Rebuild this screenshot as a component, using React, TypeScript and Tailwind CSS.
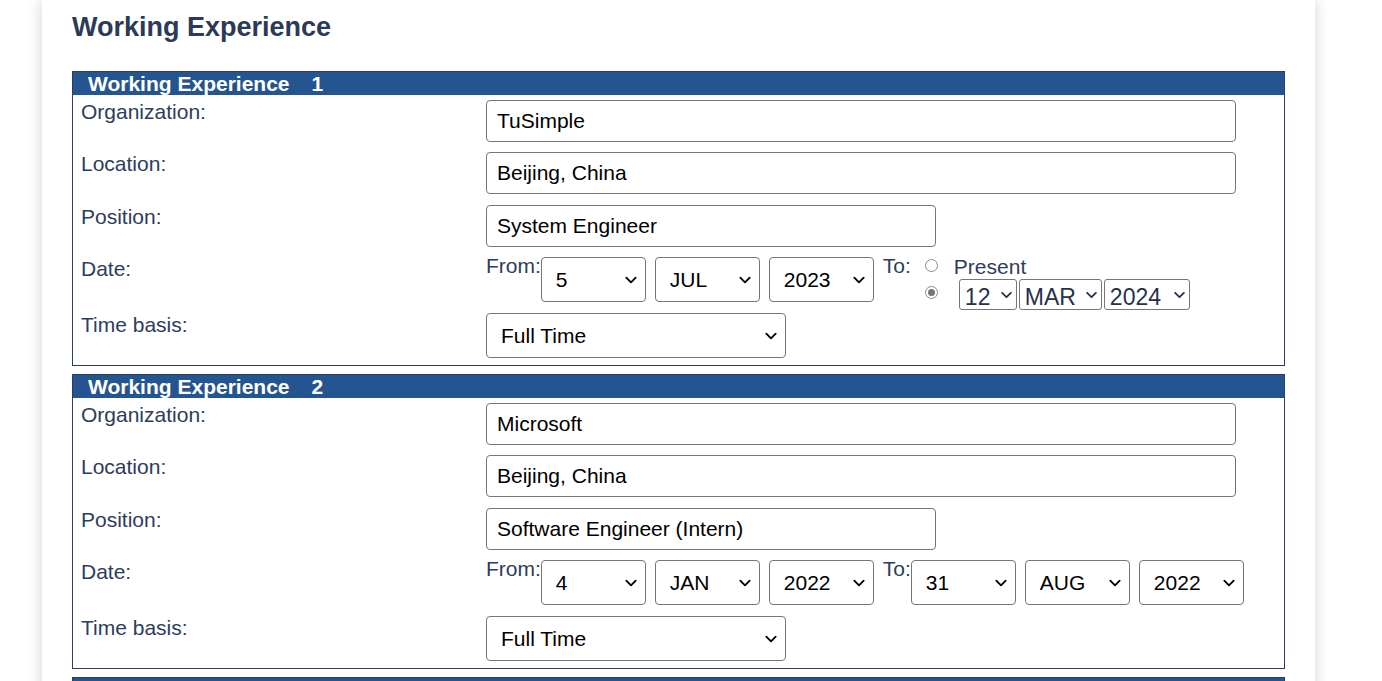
import React from "react";

const days = Array.from({ length: 31 }, (_, i) => String(i + 1));
const months = ["JAN", "FEB", "MAR", "APR", "MAY", "JUN", "JUL", "AUG", "SEP", "OCT", "NOV", "DEC"];
const years = ["2018", "2019", "2020", "2021", "2022", "2023", "2024", "2025"];

type Experience = {
  organization: string;
  location: string;
  position: string;
  from: [string, string, string];
  to: [string, string, string] | null;
  present?: [string, string, string];
  basis: string;
};

const experiences: Experience[] = [
  {
    organization: "TuSimple",
    location: "Beijing, China",
    position: "System Engineer",
    from: ["5", "JUL", "2023"],
    to: null,
    present: ["12", "MAR", "2024"],
    basis: "Full Time",
  },
  {
    organization: "Microsoft",
    location: "Beijing, China",
    position: "Software Engineer (Intern)",
    from: ["4", "JAN", "2022"],
    to: ["31", "AUG", "2022"],
    basis: "Full Time",
  },
  {
    organization: "",
    location: "",
    position: "",
    from: ["1", "JAN", "2021"],
    to: ["1", "JAN", "2021"],
    basis: "Full Time",
  },
];

function Chevron({ className }: { className: string }) {
  return (
    <svg
      viewBox="0 0 10 6"
      className={`pointer-events-none absolute top-1/2 -translate-y-1/2 ${className}`}
      fill="none"
      stroke="currentColor"
      strokeWidth="1.6"
      strokeLinecap="round"
      strokeLinejoin="round"
    >
      <polyline points="1,1 5,5 9,1" />
    </svg>
  );
}

// select with the chevron drawn on top (native one is hidden)
function Select({
  options,
  value,
  className,
  chevron,
}: {
  options: string[];
  value: string;
  className: string;
  chevron: string;
}) {
  return (
    <div className="relative inline-block">
      <select defaultValue={value} className={`block appearance-none bg-white outline-none ${className}`}>
        {options.map((o) => (
          <option key={o}>{o}</option>
        ))}
      </select>
      <Chevron className={chevron} />
    </div>
  );
}

function BigSelect({ options, value }: { options: string[]; value: string }) {
  return (
    <div className="mt-[3px]">
      <Select
        options={options}
        value={value}
        className="h-[45px] w-[105px] rounded-[4px] border border-[#767676] pl-[14px] text-black"
        chevron="right-[9px] h-[7px] w-[12px] text-black"
      />
    </div>
  );
}

function SmallSelect({ options, value, w }: { options: string[]; value: string; w: string }) {
  return (
    <Select
      options={options}
      value={value}
      className={`h-[31px] ${w} rounded-[3px] border border-[#767676] pl-[5px] text-[23px] text-[#26324a]`}
      chevron="right-[5px] h-[7px] w-[11px] text-[#26324a]"
    />
  );
}

function Radio({ checked, className }: { checked?: boolean; className?: string }) {
  return (
    <span
      className={`flex h-[13px] w-[13px] shrink-0 items-center justify-center rounded-full border border-[#8a8a8a] bg-white ${className ?? ""}`}
    >
      {checked && <span className="h-[7px] w-[7px] rounded-full bg-[#767676]" />}
    </span>
  );
}

function Row({ label, children, className }: { label: string; children: React.ReactNode; className?: string }) {
  return (
    <div className={`flex items-start ${className ?? ""}`}>
      <div className="w-[413px] shrink-0 pl-[8px] leading-[24px]">{label}</div>
      <div>{children}</div>
    </div>
  );
}

function ExperienceBox({ exp, n }: { exp: Experience; n: number }) {
  const textInput =
    "h-[42px] rounded-[4px] border border-[#767676] bg-white pl-[10px] text-black outline-none";
  return (
    <section className="mb-[8px] border border-[#2c3d5c]">
      <h3 className="h-[23px] bg-[#245590] pl-[15px] text-[21px] font-bold leading-[23px] text-white">
        Working Experience<span className="ml-[22px]">{n}</span>
      </h3>
      <div className="pb-[7px] pt-[5px]">
        <Row label="Organization:">
          <input type="text" defaultValue={exp.organization} className={`${textInput} w-[750px]`} />
        </Row>
        <Row label="Location:" className="mt-[10px]">
          <input type="text" defaultValue={exp.location} className={`${textInput} w-[750px]`} />
        </Row>
        <Row label="Position:" className="mt-[11px]">
          <input type="text" defaultValue={exp.position} className={`${textInput} w-[450px]`} />
        </Row>
        <Row label="Date:" className="mt-[7px] h-[56px] [&>div:first-child]:mt-[3px]">
          <div className="flex items-start">
            <span className="leading-[24px]">From:</span>
            <BigSelect options={days} value={exp.from[0]} />
            <span className="w-[9px]" />
            <BigSelect options={months} value={exp.from[1]} />
            <span className="w-[9px]" />
            <BigSelect options={years} value={exp.from[2]} />
            <span className="ml-[9px] leading-[24px]">To:</span>
            {exp.to ? (
              <>
                <BigSelect options={days} value={exp.to[0]} />
                <span className="w-[9px]" />
                <BigSelect options={months} value={exp.to[1]} />
                <span className="w-[9px]" />
                <BigSelect options={years} value={exp.to[2]} />
              </>
            ) : (
              <div className="ml-[14px] flex flex-col">
                <label className="flex h-[25px] items-center">
                  <Radio className="-mt-[3px]" />
                  <span className="ml-[16px] leading-[24px]">Present</span>
                </label>
                <div className="flex items-center">
                  <Radio checked className="-mt-[4px]" />
                  <div className="ml-[21px] flex gap-[2px]">
                    <SmallSelect options={days} value={exp.present![0]} w="w-[58px]" />
                    <SmallSelect options={months} value={exp.present![1]} w="w-[83px]" />
                    <SmallSelect options={years} value={exp.present![2]} w="w-[86px]" />
                  </div>
                </div>
              </div>
            )}
          </div>
        </Row>
        <Row label="Time basis:" className="mt-[3px]">
          <Select
            options={["Full Time", "Part Time"]}
            value={exp.basis}
            className="h-[45px] w-[300px] rounded-[4px] border border-[#767676] pl-[14px] text-black"
            chevron="right-[9px] h-[7px] w-[12px] text-black"
          />
        </Row>
      </div>
    </section>
  );
}

export default function App() {
  return (
    <div className="min-h-screen bg-white font-['Liberation_Sans',Arial,sans-serif] text-[21px] text-[#2d3d5c]">
      <main className="ml-[42px] w-[1273px] bg-white px-[30px] pt-[12px] shadow-[0_0_14px_rgba(0,0,0,0.18)]">
        <h2 className="mb-[28px] text-[27px] font-bold leading-[31px] text-[#2c3a58]">Working Experience</h2>
        {experiences.map((exp, i) => (
          <ExperienceBox key={i} exp={exp} n={i + 1} />
        ))}
      </main>
    </div>
  );
}
